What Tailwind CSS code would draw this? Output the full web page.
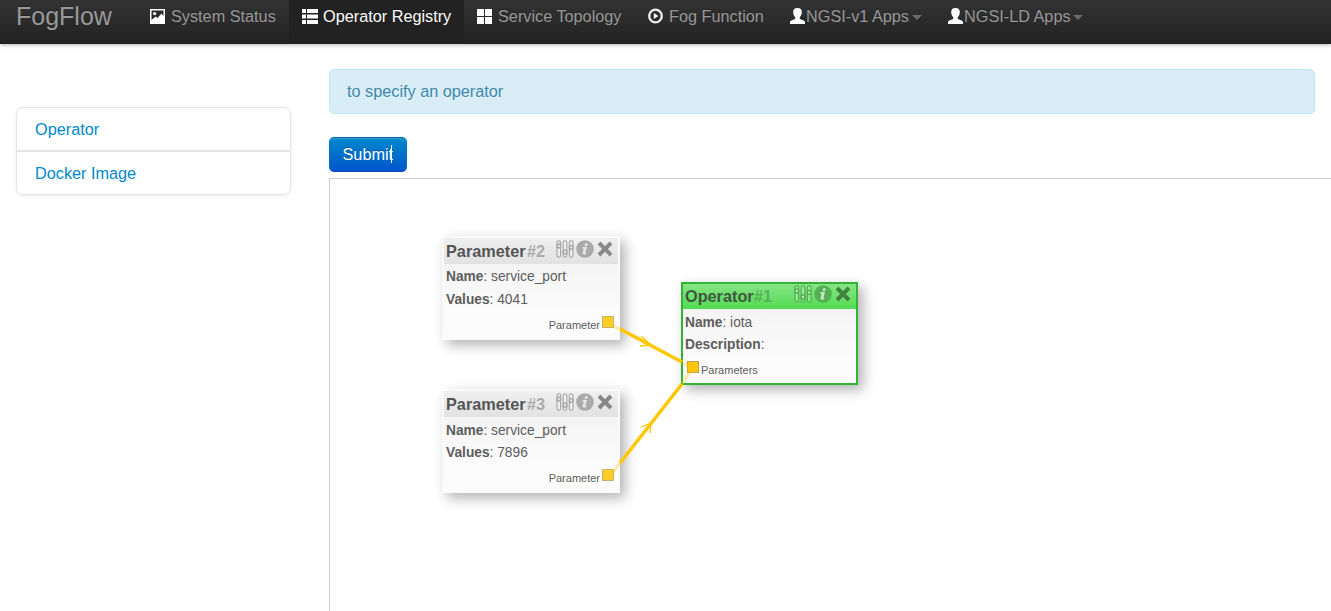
<!DOCTYPE html>
<html lang="en">
<head>
<meta charset="utf-8">
<title>FogFlow</title>
<script src="https://cdn.jsdelivr.net/npm/@tailwindcss/browser@4"></script>
</head>
<body class="h-[611px] overflow-hidden bg-white font-['Liberation_Sans',Arial,sans-serif] text-[16.25px] text-[#333]">
<svg class="hidden">
  <symbol id="sliders" viewBox="0 0 18 18"><g fill="#fff" fill-opacity=".25" stroke="currentColor" stroke-width="1.200"><rect x="1" y=".8" width="3.600" height="16.400" rx="1.800"/><rect x="7.200" y=".8" width="3.600" height="16.400" rx="1.800"/><rect x="13.400" y=".8" width="3.600" height="16.400" rx="1.800"/></g><g fill="#e4e4e4" fill-opacity=".7" stroke="currentColor" stroke-width="1.500"><circle cx="2.800" cy="6" r="1.900"/><circle cx="9" cy="12" r="1.900"/><circle cx="15.200" cy="7.500" r="1.900"/></g></symbol>
  <symbol id="info" viewBox="0 0 18 18"><circle cx="9" cy="9" r="8.8" fill="currentColor"/><path d="M9.200 3.300h2.600l-.7 2.600H8.500zM6.600 7h4.400l-1.600 5.800h1l-.3 1.400c-1.600.7-4 .5-3.500-1.300l1.100-4.300H6.300z" fill="#fff" fill-opacity=".7"/></symbol>
  <symbol id="close" viewBox="0 0 16 16"><path d="M2 2l12 12M14 2L2 14" stroke="currentColor" stroke-width="3.900"/></symbol>
  <symbol id="user" viewBox="0 0 15 16"><path d="M7.5 0C10.400 0 12 1.600 11.800 4.200c-.1 2.100-.8 3.800-2 4.800v2c1.800.9 4.900 1.200 5.200 3.200V16H0v-1.800C.3 12.200 3.400 11.900 5.200 11V9c-1.200-1-1.900-2.700-2-4.800C3 1.600 4.600 0 7.500 0z" fill="#fff"/></symbol>
</svg>

<header class="flex h-11 bg-linear-to-b from-[#333] to-[#222] text-[#999] shadow-[0_1px_4px_rgba(0,0,0,0.3)] [text-shadow:0_-1px_0_rgba(0,0,0,0.25)]">
  <a class="w-[137px] pl-4 text-[25px] leading-[33px]">FogFlow</a>
  <nav class="flex leading-[33px] whitespace-nowrap">
    <a class="flex w-[152px] pl-[13px]">
      <svg class="mt-[9px] mr-[6px] h-[15px] w-[15px] shrink-0" viewBox="0 0 15 15"><path d="M0 0h15v15H0z" fill="#fff"/><path d="M1.500 1.500h12v5.500l-2-2.500-4 4.500-1.800-1.500L1.500 11z" fill="#292929"/><circle cx="4.600" cy="4.600" r="1.700" fill="#fff"/></svg>
      <span>System Status</span>
    </a>
    <a class="flex w-[175px] bg-[#222] pl-[13px] text-white">
      <svg class="mt-[9px] mr-[5px] h-[15px] w-4 shrink-0" viewBox="0 0 16 15" fill="#fff"><path d="M0 0h4v4H0zM5 0h11v4H5zM0 5.500h4v4H0zM5 5.500h11v4H5zM0 11h4v4H0zM5 11h11v4H5z"/></svg>
      <span>Operator Registry</span>
    </a>
    <a class="flex w-[171px] pl-[13px]">
      <svg class="mt-[9px] mr-[6px] h-[15px] w-[15px] shrink-0" viewBox="0 0 15 15" fill="#fff"><path d="M0 0h7v7H0zM8 0h7v7H8zM0 8h7v7H0zM8 8h7v7H8z"/></svg>
      <span>Service Topology</span>
    </a>
    <a class="flex w-[142px] pl-[13px]">
      <svg class="mt-2 mr-[6px] h-4 w-[15px] shrink-0" viewBox="0 0 15 16"><circle cx="7.500" cy="8" r="6.300" fill="none" stroke="#eee" stroke-width="2.300"/><path d="M5.800 5l4.500 3-4.500 3z" fill="#fff"/></svg>
      <span>Fog Function</span>
    </a>
    <a class="flex w-[158px] pl-[13px]">
      <svg class="mt-2 mr-[1px] h-4 w-[15px] shrink-0"><use href="#user"/></svg>
      <span>NGSI-v1 Apps</span>
      <svg class="mt-[15px] ml-[3px] h-[5px] w-[10px]" viewBox="0 0 10 5"><path d="M0 0h10L5 5z" fill="#6b6b6b"/></svg>
    </a>
    <a class="flex pl-[13px]">
      <svg class="mt-2 mr-[1px] h-4 w-[15px] shrink-0"><use href="#user"/></svg>
      <span>NGSI-LD Apps</span>
      <svg class="mt-[15px] ml-[2px] h-[5px] w-[10px]" viewBox="0 0 10 5"><path d="M0 0h10L5 5z" fill="#6b6b6b"/></svg>
    </a>
  </nav>
</header>

<div class="flex">
  <aside class="mt-[63px] mr-[38px] ml-4 h-[88px] w-[275px] shrink-0 rounded-[7px] border border-[#e4e4e4] text-[#08c] shadow-[0_1px_4px_rgba(0,0,0,0.065)]">
    <a class="block h-11 border-b-2 border-[#e4e4e4] pl-[18px] leading-[42px]">Operator</a>
    <a class="block pl-[18px] leading-[42px]">Docker Image</a>
  </aside>
  <main class="w-[1002px] shrink-0">
    <div class="mt-[25px] h-[45px] w-[986px] rounded-[5px] border border-[#bce8f1] bg-[#d9edf7] pl-[17px] leading-[42px] text-[#3a87ad] [text-shadow:0_1px_0_rgba(255,255,255,0.5)]">to specify an operator</div>
    <button class="mt-[23px] flex h-[35px] w-[78px] rounded-[5px] border border-[#0074cc] border-t-[#0064ac] border-b-[#0048b0] bg-linear-to-b from-[#08c] to-[#05c] pl-[12.500px] leading-[33px] text-white shadow-[inset_0_1px_0_rgba(255,255,255,0.2)] [text-shadow:0_-1px_0_rgba(0,0,0,0.25)]"><span>Submit</span><i class="mt-[7px] -ml-[2px] h-[18px] w-px bg-white"></i></button>
    <section class="relative mt-[6px] h-[450px] border border-r-0 border-[#ccc] text-[13.75px] text-[#5c5c5c]">
      <article class="absolute top-[57px] left-[112px] h-[104px] w-[178px] border-2 border-[#fafafa] bg-linear-to-b from-[#efefef] to-[#fcfcfc] to-75% shadow-[5px_5px_12px_rgba(0,0,0,0.3)]">
        <header class="flex h-[26px] bg-linear-to-b from-[#efefef] to-[#e2e2e2] pl-[2px] text-[16.250px] leading-[27px] text-[#aaa]">
          <b class="w-[81px] text-[#555]">Parameter</b><b class="w-[29px]">#2</b>
          <svg class="mt-[2px] h-[18px] w-[18px]"><use href="#sliders"/></svg><svg class="mt-[2px] ml-[2px] h-[18px] w-[18px]"><use href="#info"/></svg><svg class="mt-[3px] ml-[3px] h-4 w-4 text-[#888]"><use href="#close"/></svg>
        </header>
        <p class="pl-[2px] leading-[25px]"><b>Name</b>: service_port</p>
        <p class="pl-[2px] leading-[21px]"><b>Values</b>: 4041</p>
        <p class="mt-[8px] flex justify-end pr-[4px] text-[11px] leading-[15px]">Parameter<i class="ml-[2px] h-3 w-3 -translate-y-[2px] border border-[#c4b070] bg-[#ffcd28]"></i></p>
      </article>
      <article class="absolute top-[210px] left-[112px] h-[104px] w-[178px] border-2 border-[#fafafa] bg-linear-to-b from-[#efefef] to-[#fcfcfc] to-75% shadow-[5px_5px_12px_rgba(0,0,0,0.3)]">
        <header class="flex h-[26px] bg-linear-to-b from-[#efefef] to-[#e2e2e2] pl-[2px] text-[16.250px] leading-[27px] text-[#aaa]">
          <b class="w-[81px] text-[#555]">Parameter</b><b class="w-[29px]">#3</b>
          <svg class="mt-[2px] h-[18px] w-[18px]"><use href="#sliders"/></svg><svg class="mt-[2px] ml-[2px] h-[18px] w-[18px]"><use href="#info"/></svg><svg class="mt-[3px] ml-[3px] h-4 w-4 text-[#888]"><use href="#close"/></svg>
        </header>
        <p class="pl-[2px] leading-[27px]"><b>Name</b>: service_port</p>
        <p class="-mt-[2px] pl-[2px] leading-[21px]"><b>Values</b>: 7896</p>
        <p class="mt-[8px] flex justify-end pr-[4px] text-[11px] leading-[15px]">Parameter<i class="ml-[2px] h-3 w-3 -translate-y-[2px] border border-[#c4b070] bg-[#ffcd28]"></i></p>
      </article>
      <article class="absolute top-[103px] left-[351px] h-[103px] w-[177px] border-2 border-[#32b332] bg-linear-to-b from-[#efefef] to-[#fcfcfc] to-75% shadow-[5px_5px_12px_rgba(0,0,0,0.3)]">
        <header class="flex h-[25px] bg-linear-to-b from-[#85e485] to-[#51db51] pl-[2px] text-[16.250px] leading-[25px] text-[#54b054]">
          <b class="w-[69px] text-[#40583f]">Operator</b><b class="w-[40px]">#1</b>
          <svg class="mt-[1px] h-[18px] w-[18px]"><use href="#sliders" fill-opacity=".3"/></svg><svg class="mt-[1px] ml-[2px] h-[18px] w-[18px]"><use href="#info"/></svg><svg class="mt-[2px] ml-[3px] h-4 w-4 text-[#408340]"><use href="#close"/></svg>
        </header>
        <p class="pl-[2px] leading-[27px]"><b>Name</b>: iota</p>
        <p class="-mt-[1px] pl-[2px] leading-[20px]"><b>Description</b>:</p>
        <p class="mt-[8px] flex pl-[4px] text-[11px] leading-[15px]"><i class="mr-[2px] h-3 w-3 -translate-y-[2px] border border-[#c4a050] bg-[#ffc40c]"></i>Parameters</p>
      </article>
      <svg class="pointer-events-none absolute top-0 left-0 h-[431px] w-[1001px]" viewBox="330 179 1001 431" fill="none">
        <g stroke="#ffc700">
          <path d="M611 325L620 329M692 369L683 363" stroke-width="3.500" opacity=".3"/>
          <path d="M620 329L682 362" stroke-width="3.500"/>
          <path d="M641 336L651 345L640 346" stroke-width="1.300"/>
          <path d="M611 475L620 463M692 369L682 384" stroke-width="3.500" opacity=".3"/>
          <path d="M620 463L682 384" stroke-width="3.500"/>
          <path d="M641 427L651 423L650 433" stroke-width="1.300"/>
        </g>
      </svg>
    </section>
  </main>
</div>
</body>
</html>
